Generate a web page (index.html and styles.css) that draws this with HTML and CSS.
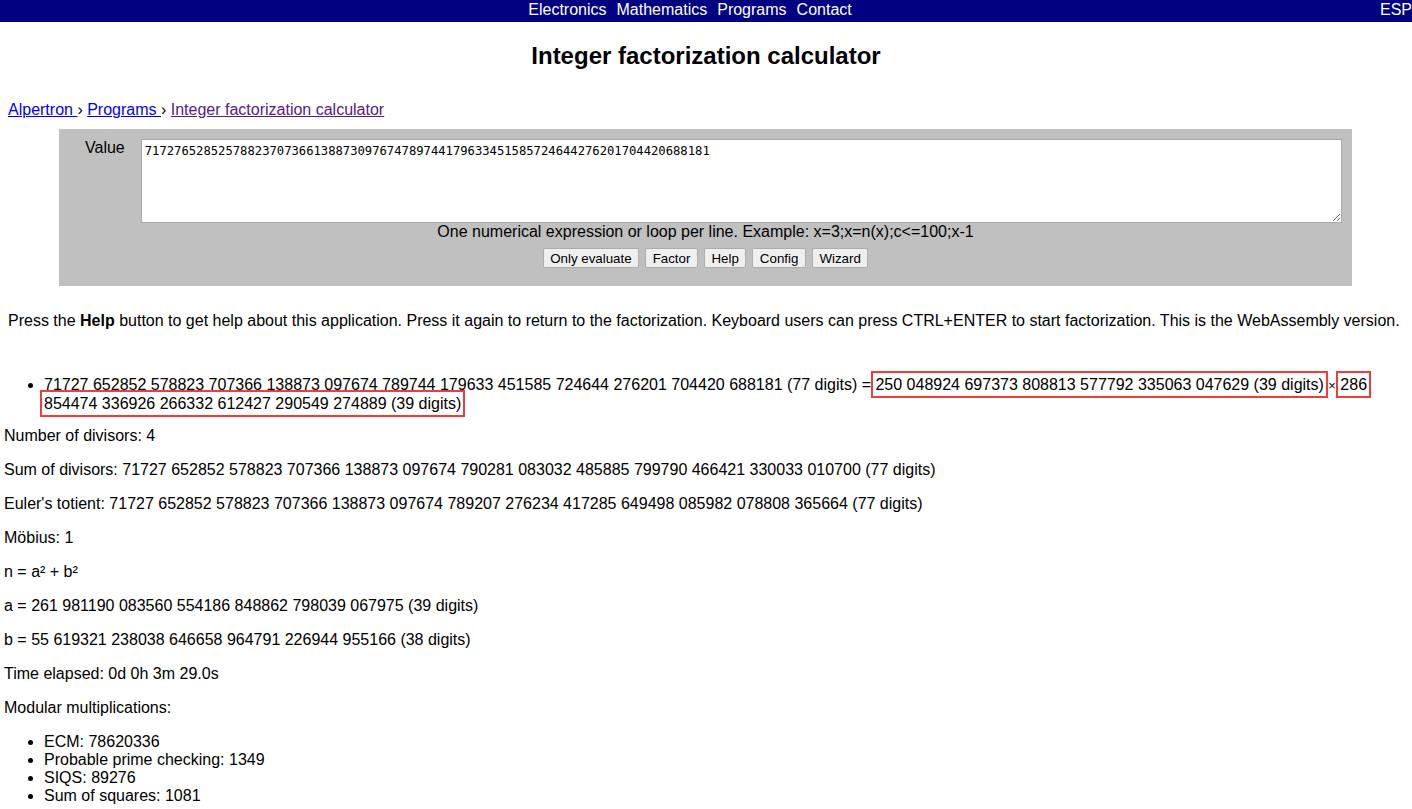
FILE: index.html
```html
<!DOCTYPE html>
<html lang="en">
<head>
<meta charset="utf-8">
<title>Integer factorization calculator</title>
<link rel="stylesheet" href="styles.css">
</head>
<body>
<nav class="topbar">
  <div class="topbar-links">
    <a href="#">Electronics</a>
    <a href="#">Mathematics</a>
    <a href="#">Programs</a>
    <a href="#">Contact</a>
  </div>
  <a class="topbar-lang" href="#">ESP</a>
</nav>

<h1 class="title">Integer factorization calculator</h1>

<div class="breadcrumb"><a href="#">Alpertron </a>› <a href="#">Programs </a>› <a class="visited" href="#">Integer factorization calculator</a></div>

<form class="calc">
  <div class="calc-row">
    <label class="calc-label" for="value">Value</label>
    <textarea id="value" class="calc-input">71727652852578823707366138873097674789744179633451585724644276201704420688181</textarea>
  </div>
  <div class="calc-hint">One numerical expression or loop per line. Example: x=3;x=n(x);c&lt;=100;x-1</div>
  <div class="calc-buttons">
    <button type="button">Only evaluate</button>
    <button type="button">Factor</button>
    <button type="button">Help</button>
    <button type="button">Config</button>
    <button type="button">Wizard</button>
  </div>
</form>

<p class="help-text">Press the <b>Help</b> button to get help about this application. Press it again to return to the factorization. Keyboard users can press CTRL+ENTER to start factorization. This is the WebAssembly version.</p>

<div class="results">
  <ul class="factors">
    <li>71727 652852 578823 707366 138873 097674 789744 179633 451585 724644 276201 704420 688181 (77 digits) = <span class="mark">250 048924 697373 808813 577792 335063 047629 (39 digits)</span> <span class="times">×</span> <span class="mark">286 854474 336926 266332 612427 290549 274889 (39 digits)</span></li>
  </ul>
  <p class="first-stat">Number of divisors: 4</p>
  <p>Sum of divisors: 71727 652852 578823 707366 138873 097674 790281 083032 485885 799790 466421 330033 010700 (77 digits)</p>
  <p>Euler's totient: 71727 652852 578823 707366 138873 097674 789207 276234 417285 649498 085982 078808 365664 (77 digits)</p>
  <p>Möbius: 1</p>
  <p>n = a² + b²</p>
  <p>a = 261 981190 083560 554186 848862 798039 067975 (39 digits)</p>
  <p>b = 55 619321 238038 646658 964791 226944 955166 (38 digits)</p>
  <p>Time elapsed: 0d 0h 3m 29.0s</p>
  <p>Modular multiplications:</p>
  <ul class="stats">
    <li>ECM: 78620336</li>
    <li>Probable prime checking: 1349</li>
    <li>SIQS: 89276</li>
    <li>Sum of squares: 1081</li>
  </ul>
</div>
</body>
</html>
```

FILE: styles.css
```css
html, body {
  margin: 0;
  padding: 0;
  background: #ffffff;
}
body {
  font-family: "Liberation Sans", Arial, sans-serif;
  font-size: 16px;
  color: #000000;
  overflow-x: hidden;
}

.topbar {
  display: flex;
  align-items: flex-start;
  box-sizing: border-box;
  height: 22px;
  padding-top: 1px;
  background: #000080;
  line-height: 18px;
}
.topbar-links {
  flex: 1;
  display: flex;
  justify-content: center;
  gap: 10px;
}
.topbar a {
  color: #ffffff;
  text-decoration: none;
}
.topbar-lang {
  white-space: nowrap;
}

.title {
  margin: 20px 0 0 0;
  text-align: center;
  font-size: 24px;
  line-height: 28px;
  font-weight: bold;
}

.breadcrumb {
  margin: 31px 0 0 8px;
  line-height: 18px;
}
.breadcrumb a {
  color: #0000ee;
}
.breadcrumb a.visited {
  color: #551a8b;
}

.calc {
  width: 1273px;
  margin: 10px 0 0 59px;
  padding: 10px 10px 18px 10px;
  background: #c0c0c0;
}
.calc-row {
  display: grid;
  grid-template-columns: auto 1fr;
  column-gap: 16px;
}
.calc-label {
  padding-left: 16px;
  line-height: 18px;
}
.calc-input {
  display: block;
  box-sizing: border-box;
  width: 100%;
  height: 84px;
  margin: 0;
  padding: 4px 3px;
  border: 1px solid #a9a9a9;
  background: #ffffff;
  font-family: "DejaVu Sans Mono", "Liberation Mono", monospace;
  font-size: 12.2px;
  line-height: 14px;
  color: #000000;
  resize: vertical;
}
.calc-hint {
  text-align: center;
  line-height: 18px;
}
.calc-buttons {
  display: flex;
  justify-content: center;
  gap: 6px;
  margin-top: 7px;
}
.calc-buttons button {
  height: 20px;
  padding: 0 6.5px;
  border: 1px solid #adadad;
  border-radius: 2px;
  background: #efefef;
  font-family: "Liberation Sans", Arial, sans-serif;
  font-size: 13.33px;
  color: #000000;
}

.help-text {
  margin: 26px 8px 0 8px;
  line-height: 18px;
}

.results {
  padding: 0 0 0 4px;
  line-height: 18px;
}
.results p {
  margin: 16px 0;
}
.factors {
  margin: 46px 0 0 0;
  padding-left: 40px;
}
.results .first-stat {
  margin-top: 14px;
}
.stats {
  margin: 16px 0;
  padding-left: 40px;
}
.mark {
  outline: 2px solid #f23c3c;
  outline-offset: 2px;
  padding: 1px 0;
  -webkit-box-decoration-break: clone;
  box-decoration-break: clone;
}
.times {
  font-size: 13px;
}
```
